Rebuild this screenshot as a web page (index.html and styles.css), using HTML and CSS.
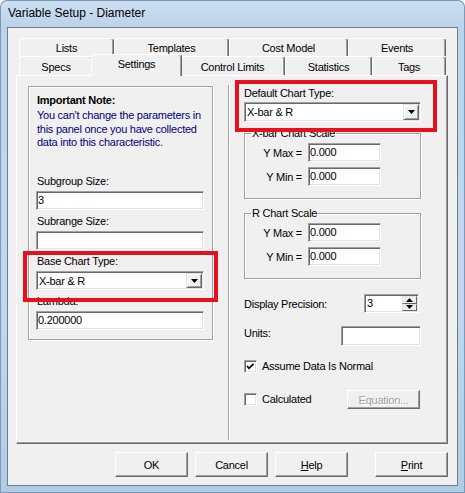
FILE: index.html
```html
<!DOCTYPE html>
<html>
<head>
<meta charset="utf-8">
<title>Variable Setup - Diameter</title>
<link rel="stylesheet" href="styles.css">
</head>
<body>
<div class="window">
  <div class="titlebar">Variable Setup - Diameter</div>
  <div class="client">
    <div class="tabs">
      <div class="tabrow back">
        <div class="tab t-lists">Lists</div>
        <div class="tab t-templates">Templates</div>
        <div class="tab t-cost">Cost Model</div>
        <div class="tab t-events">Events</div>
      </div>
      <div class="tabrow front">
        <div class="tab t-specs">Specs</div>
        <div class="tab t-settings selected">Settings</div>
        <div class="tab t-limits">Control Limits</div>
        <div class="tab t-stats">Statistics</div>
        <div class="tab t-tags">Tags</div>
      </div>
    </div>
    <div class="panel">
      <div class="col-left">
        <div class="notebox">
          <div class="note-title">Important Note:</div>
          <div class="note-text">You can't change the parameters in<br>this panel once you have collected<br>data into this characteristic.</div>
          <div class="field">
            <div class="label">Subgroup Size:</div>
            <div class="edit">3</div>
          </div>
          <div class="field">
            <div class="label">Subrange Size:</div>
            <div class="edit"></div>
          </div>
          <div class="field">
            <div class="label">Base Chart Type:</div>
            <div class="combo combo-left">
              <div class="combo-text">X-bar &amp; R</div>
              <div class="ddbtn"><svg width="7" height="4" viewBox="0 0 7 4"><polygon points="0,0 7,0 3.5,4" fill="#000"/></svg></div>
            </div>
          </div>
          <div class="field">
            <div class="label">Lambda:</div>
            <div class="edit">0.200000</div>
          </div>
        </div>
      </div>
      <div class="divider"></div>
      <div class="col-right">
        <div class="rlabel">Default Chart Type:</div>
        <div class="combo combo-right">
          <div class="combo-text">X-bar &amp; R</div>
          <div class="ddbtn"><svg width="7" height="4" viewBox="0 0 7 4"><polygon points="0,0 7,0 3.5,4" fill="#000"/></svg></div>
        </div>
        <fieldset class="group group-x">
          <legend>X-bar Chart Scale</legend>
          <div class="yrow"><div class="ylabel">Y Max =</div><div class="edit yedit">0.000</div></div>
          <div class="yrow second"><div class="ylabel">Y Min =</div><div class="edit yedit">0.000</div></div>
        </fieldset>
        <fieldset class="group group-r">
          <legend>R Chart Scale</legend>
          <div class="yrow"><div class="ylabel">Y Max =</div><div class="edit yedit">0.000</div></div>
          <div class="yrow second"><div class="ylabel">Y Min =</div><div class="edit yedit">0.000</div></div>
        </fieldset>
        <div class="prec-row">
          <div class="plabel">Display Precision:</div>
          <div class="spinner">
            <div class="spin-text">3</div>
            <div class="spin-btns">
              <div class="spin-btn"><svg width="7" height="4" viewBox="0 0 7 4"><polygon points="0,4 7,4 3.5,0" fill="#000"/></svg></div>
              <div class="spin-btn"><svg width="7" height="4" viewBox="0 0 7 4"><polygon points="0,0 7,0 3.5,4" fill="#000"/></svg></div>
            </div>
          </div>
        </div>
        <div class="units-row">
          <div class="plabel">Units:</div>
          <div class="edit units-edit"></div>
        </div>
        <div class="check-row">
          <div class="checkbox"><svg width="11" height="11" viewBox="0 0 11 11"><polyline points="2,5 4,7.3 8.5,2.8" fill="none" stroke="#000" stroke-width="1.7"/></svg></div>
          <div class="check-label">Assume Data Is Normal</div>
        </div>
        <div class="check-row calc-row">
          <div class="checkbox"></div>
          <div class="check-label">Calculated</div>
          <div class="btn btn-small disabled">Equation...</div>
        </div>
      </div>
    </div>
    <div class="buttons">
      <div class="btn">OK</div>
      <div class="btn">Cancel</div>
      <div class="btn"><u>H</u>elp</div>
      <div class="btn btn-print"><u>P</u>rint</div>
    </div>
  </div>
  <div class="highlight hl-left"></div>
  <div class="highlight hl-right"></div>
</div>
</body>
</html>
```

FILE: styles.css
```css
* { box-sizing: border-box; }
html, body { margin: 0; padding: 0; }
body {
  width: 465px;
  height: 493px;
  overflow: hidden;
  background: #ffffff;
  font-family: "Liberation Sans", Arial, sans-serif;
  font-size: 11px;
  letter-spacing: -0.25px;
  color: #000;
}
.window {
  position: relative;
  width: 465px;
  height: 493px;
  padding: 0 7px 7px;
  display: flex;
  flex-direction: column;
  background: linear-gradient(180deg, #cddff1 0, #bcd3ea 26px, #c3d8ed 60%, #b2cbe5 100%);
  border-radius: 7px 7px 0 0;
  box-shadow: inset 0 0 0 1px #7d98b6;
}
.titlebar {
  flex: none;
  height: 27px;
  display: flex;
  align-items: center;
  padding: 0 0 1px 1px;
  font-size: 12px;
  letter-spacing: 0;
  color: #000;
}
.client {
  flex: 1;
  background: #f0f0f0;
  border: 1px solid #6e7d90;
  padding: 10px 9px 0 8px;
  display: flex;
  flex-direction: column;
}
.tabs {
  flex: none;
  margin-left: 3px;
  width: 427px;
  height: 37px;
  display: flex;
  flex-direction: column;
}
.tabrow { display: flex; flex: none; }
.back { height: 18px; }
.front { height: 19px; }
.tab {
  flex: none;
  height: 100%;
  display: flex;
  align-items: center;
  justify-content: center;
  background: #f0f0f0;
  border-top: 1px solid #ffffff;
  border-left: 1px solid #ffffff;
  border-right: 1px solid #696969;
  box-shadow: inset -1px 0 0 #a0a0a0;
  border-radius: 3px 3px 0 0;
  padding-top: 1px;
}
.t-lists { width: 95px; }
.t-templates { width: 115px; }
.t-cost { width: 119px; }
.t-events { width: 98px; }
.t-specs { width: 74px; }
.t-settings { width: 91px; }
.t-limits { width: 105px; }
.t-stats { width: 87px; }
.t-tags { width: 74px; }
.selected {
  position: relative;
  z-index: 1;
  height: 22px;
  margin: -2px -2px 0 -2px;
  padding-top: 0;
  padding-bottom: 4px;
}
.panel {
  flex: none;
  width: 432px;
  height: 369px;
  border-style: solid;
  border-width: 1px;
  border-color: #ffffff #696969 #696969 #ffffff;
  box-shadow: inset -1px -1px 0 #a0a0a0;
  display: grid;
  grid-template-columns: 211px 2px 1fr;
  align-items: start;
}
.col-left { padding: 10px 0 0 11px; }
.notebox {
  width: 185px;
  border: 1px solid #a0a0a0;
  box-shadow: inset 1px 1px 0 #ffffff, 1px 1px 0 #ffffff;
  padding: 6px 8px 9px 7px;
}
.note-title { font-weight: bold; line-height: 14px; padding-left: 1px; }
.note-text {
  color: #000080;
  line-height: 13.5px;
  margin: 2px 0 24.5px;
  padding-left: 1px;
}
.field { margin-bottom: 4px; }
.field:last-child { margin-bottom: 0; }
.label { line-height: 14px; margin-bottom: 3px; padding-left: 1px; }
.edit {
  height: 19px;
  background: #ffffff;
  border: 1px solid;
  border-color: #a0a0a0 #ffffff #ffffff #a0a0a0;
  box-shadow: inset 1px 1px 0 #696969, inset -1px -1px 0 #e3e3e3;
  padding-left: 1px;
  line-height: 17px;
  white-space: nowrap;
}
.combo {
  display: flex;
  background: #ffffff;
  border: 1px solid;
  border-color: #a0a0a0 #ffffff #ffffff #a0a0a0;
  box-shadow: inset 1px 1px 0 #696969, inset -1px -1px 0 #e3e3e3;
  padding: 1px;
}
.combo-left { height: 19px; }
.combo-right { height: 20px; width: 177px; }
.combo-text { flex: 1; line-height: 16px; padding-left: 1px; }
.combo-right .combo-text { line-height: 17px; }
.ddbtn {
  flex: none;
  width: 16px;
  height: 100%;
  background: #f0f0f0;
  border: 1px solid;
  border-color: #e3e3e3 #696969 #696969 #e3e3e3;
  box-shadow: inset 1px 1px 0 #ffffff, inset -1px -1px 0 #a0a0a0;
  display: flex;
  align-items: center;
  justify-content: center;
}
.divider {
  margin-top: 9px;
  height: 355px;
  border-left: 1px solid #a0a0a0;
  border-right: 1px solid #ffffff;
}
.col-right { padding: 10px 0 0 14px; }
.rlabel { line-height: 14px; margin-bottom: 2px; }
.group {
  width: 177px;
  margin: 4px 0 0;
  padding: 3px 0 12px 0;
  border: 1px solid #a0a0a0;
  box-shadow: inset 1px 1px 0 #ffffff, 1px 1px 0 #ffffff;
  min-inline-size: 0;
}
.group-r { margin-top: 7px; }
.group legend {
  line-height: 14px;
  padding: 0 1px;
  margin-left: 6px;
}
.yrow { display: flex; align-items: center; height: 19px; }
.yrow.second { margin-top: 5px; }
.ylabel { width: 57px; text-align: right; }
.yedit { margin-left: 6px; width: 73px; }
.prec-row {
  margin-top: 15px;
  display: flex;
  align-items: center;
  width: 177px;
}
.plabel { line-height: 14px; }
.spinner {
  margin-left: auto;
  margin-right: 2px;
  width: 55px;
  height: 19px;
  display: flex;
  background: #ffffff;
  border: 1px solid;
  border-color: #a0a0a0 #ffffff #ffffff #a0a0a0;
  box-shadow: inset 1px 1px 0 #696969, inset -1px -1px 0 #e3e3e3;
  padding: 1px;
}
.spin-text { flex: 1; line-height: 15px; padding-left: 1px; }
.spin-btns { width: 15px; display: flex; flex-direction: column; }
.spin-btn {
  flex: 1;
  background: #f0f0f0;
  border: 1px solid;
  border-color: #e3e3e3 #696969 #696969 #e3e3e3;
  display: flex;
  align-items: center;
  justify-content: center;
}
.units-row {
  margin-top: 13px;
  display: flex;
  align-items: flex-start;
  width: 177px;
}
.units-edit { margin-left: auto; width: 80px; height: 20px; }
.check-row {
  margin-top: 14px;
  display: flex;
  align-items: center;
  height: 13px;
  width: 177px;
}
.calc-row { margin-top: 17px; height: 19px; }
.checkbox {
  flex: none;
  width: 13px;
  height: 13px;
  background: #ffffff;
  border: 1px solid;
  border-color: #a0a0a0 #ffffff #ffffff #a0a0a0;
  box-shadow: inset 1px 1px 0 #696969, inset -1px -1px 0 #e3e3e3;
  display: flex;
}
.checkbox svg { display: block; }
.check-label { margin-left: 5px; line-height: 13px; }
.btn {
  width: 73px;
  height: 25px;
  display: flex;
  align-items: center;
  justify-content: center;
  background: #f0f0f0;
  border: 1px solid;
  border-color: #ffffff #696969 #696969 #ffffff;
  box-shadow: inset -1px -1px 0 #a0a0a0;
}
.btn-small { height: 19px; margin-left: auto; margin-right: 1px; }
.disabled { color: #a0a0a0; text-shadow: 1px 1px 0 #ffffff; }
.buttons {
  flex: none;
  display: flex;
  justify-content: flex-end;
  gap: 7px;
  margin-top: 8px;
}
.btn-print { margin-left: 20px; }
.highlight {
  position: absolute;
  border: 4px solid #e8101a;
  pointer-events: none;
}
.hl-left { left: 23px; top: 251px; width: 195px; height: 51px; }
.hl-right { left: 235px; top: 80px; width: 202px; height: 52px; }
```
